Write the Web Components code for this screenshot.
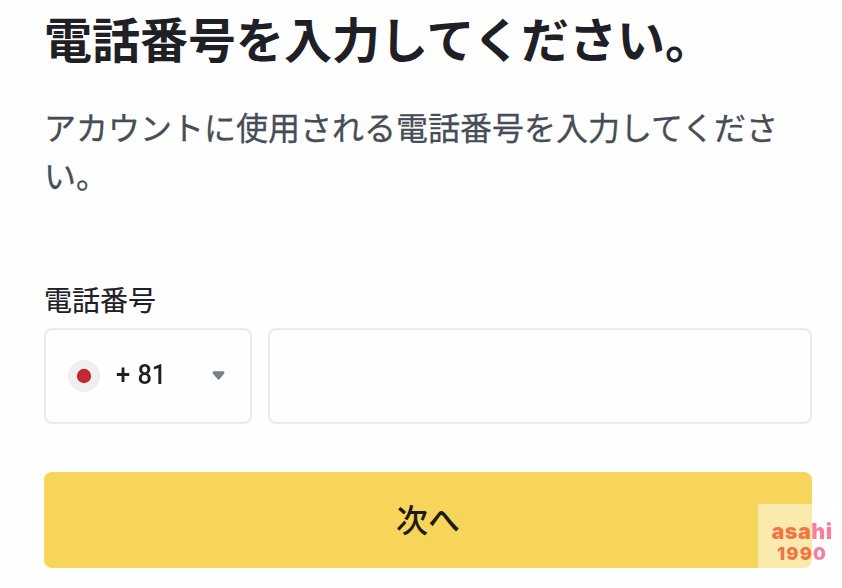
<!DOCTYPE html>
<html lang="ja">
<head>
<meta charset="utf-8">
<title>電話番号</title>
<style>
  body {
    margin: 0;
    background: #fefefe;
    color: #1e2026;
    font-family: "Noto Sans CJK JP", sans-serif;
  }
</style>
</head>
<body>
<phone-form>
  <page-intro slot="intro">
    電話番号を入力してください。
    <span slot="text">アカウントに使用される電話番号を入力してください。</span>
  </page-intro>
  <form-field label="電話番号">
    <country-select code="+ 81"></country-select>
    <phone-input></phone-input>
  </form-field>
  <submit-button slot="action">次へ</submit-button>
</phone-form>
<corner-badge><span>asahi</span><span slot="year">1990</span></corner-badge>

<script>
class PhoneForm extends HTMLElement {
  constructor() {
    super();
    this.attachShadow({mode: 'open'}).innerHTML = `
      <style>
        :host {
          display: flex;
          flex-direction: column;
          box-sizing: border-box;
          width: 842px;
          height: 588px;
          padding: 5px 30px 0 44px;
        }
      </style>
      <slot name="intro"></slot>
      <slot></slot>
      <slot name="action"></slot>
    `;
  }
}

class PageIntro extends HTMLElement {
  constructor() {
    super();
    this.attachShadow({mode: 'open'}).innerHTML = `
      <style>
        :host { display: block; width: 768px; }
        h1 {
          margin: 0;
          font-size: 48px;
          line-height: 64px;
          font-weight: 700;
        }
        p {
          margin: 33px 0 0;
          color: #474d57;
          font-size: 32px;
          line-height: 48px;
          -webkit-text-stroke: .3px #474d57;
        }
      </style>
      <h1><slot></slot></h1>
      <p><slot name="text"></slot></p>
    `;
  }
}

class FormField extends HTMLElement {
  connectedCallback() {
    this.attachShadow({mode: 'open'}).innerHTML = `
      <style>
        :host { display: block; width: 768px; margin-top: 85px; }
        label {
          display: block;
          height: 45px;
          font-size: 28px;
          line-height: 32px;
          -webkit-text-stroke: .2px #1e2026;
        }
        .row { display: flex; gap: 16px; }
      </style>
      <label>${this.getAttribute('label')}</label>
      <div class="row"><slot></slot></div>
    `;
  }
}

class CountrySelect extends HTMLElement {
  connectedCallback() {
    this.attachShadow({mode: 'open'}).innerHTML = `
      <style>
        :host {
          display: flex;
          align-items: center;
          box-sizing: border-box;
          width: 208px;
          height: 96px;
          padding: 0 24px 0 22px;
          border: 2px solid #eaeaeb;
          border-radius: 8px;
        }
        .code {
          flex: 1;
          margin-left: 16px;
          padding-bottom: 3px;
          font: 500 28px/32px Roboto, sans-serif;
          white-space: nowrap;
          word-spacing: 1px;
          transform: scaleX(.91);
          transform-origin: left;
        }
        svg { display: block; }
      </style>
      <svg width="32" height="32" viewBox="0 0 32 32">
        <circle cx="16" cy="16" r="16" fill="#f0eff0"/>
        <circle cx="16" cy="16" r="7.2" fill="#c12a34"/>
      </svg>
      <span class="code">${this.getAttribute('code')}</span>
      <svg width="14" height="10" viewBox="0 0 14 10">
        <path d="M1.3 0.2h10.4q.6 0 .6.6v1.8L7.2 8.6q-.6.6-1.2 0L.7 2.6V.8q0-.6.6-.6z" fill="#76808f"/>
      </svg>
    `;
  }
}

class PhoneInput extends HTMLElement {
  constructor() {
    super();
    this.attachShadow({mode: 'open'}).innerHTML = `
      <style>
        :host { display: block; flex: 1; }
        input {
          display: block;
          box-sizing: border-box;
          width: 100%;
          height: 96px;
          padding: 0 22px;
          border: 2px solid #eaeaeb;
          border-radius: 8px;
          background: transparent;
          font-size: 28px;
          outline: none;
        }
      </style>
      <input type="tel">
    `;
  }
}

class SubmitButton extends HTMLElement {
  constructor() {
    super();
    this.attachShadow({mode: 'open'}).innerHTML = `
      <style>
        :host { display: block; width: 768px; margin-top: 48px; }
        button {
          display: block;
          width: 100%;
          height: 96px;
          padding: 0 0 4px;
          border: 0;
          border-radius: 8px;
          background: #f7d55a;
          color: #1e1b16;
          font: 500 32px/92px "Noto Sans CJK JP", sans-serif;
        }
      </style>
      <button type="button"><slot></slot></button>
    `;
  }
}

class CornerBadge extends HTMLElement {
  constructor() {
    super();
    this.attachShadow({mode: 'open'}).innerHTML = `
      <style>
        :host {
          position: absolute;
          left: 758px;
          top: 504px;
          box-sizing: border-box;
          width: 84px;
          height: 64px;
          padding: 16px 0 0 4px;
          background: rgba(255, 255, 255, .5);
          font-family: Inter, sans-serif;
          font-weight: 900;
          text-align: center;
        }
        /* the pink part starts at the edge of the button below */
        div {
          background: linear-gradient(90deg, #f37445 50.5px, #f5809b 50.5px);
          -webkit-background-clip: text;
          background-clip: text;
          color: transparent;
          font-size: 21.5px;
          line-height: 22px;
          letter-spacing: .5px;
        }
        .year {
          font-size: 18px;
          line-height: 23px;
          letter-spacing: 1.2px;
        }
      </style>
      <div><slot></slot></div>
      <div class="year"><slot name="year"></slot></div>
    `;
  }
}

customElements.define('phone-form', PhoneForm);
customElements.define('page-intro', PageIntro);
customElements.define('form-field', FormField);
customElements.define('country-select', CountrySelect);
customElements.define('phone-input', PhoneInput);
customElements.define('submit-button', SubmitButton);
customElements.define('corner-badge', CornerBadge);
</script>
</body>
</html>
